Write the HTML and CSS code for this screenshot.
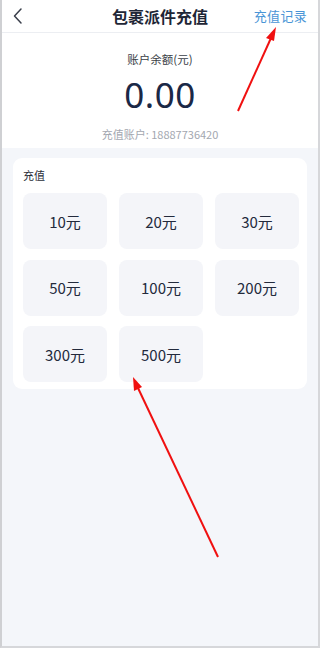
FILE: index.html
```html
<!DOCTYPE html>
<html lang="zh">
<head>
<meta charset="utf-8">
<link rel="stylesheet" href="styles.css">
</head>
<body>
<div class="screen">
  <header class="topbar">
    <span class="back">
      <svg width="12" height="18" viewBox="0 0 12 18"><path d="M9 2 L2.5 9 L9 16" fill="none" stroke="#3a3f4b" stroke-width="1.5" stroke-linecap="round" stroke-linejoin="round"/></svg>
    </span>
    <h1 class="title">包裹派件充值</h1>
    <a class="record">充值记录</a>
  </header>
  <section class="balance">
    <div class="balance-label">账户余额(元)</div>
    <div class="balance-value">0.00</div>
    <div class="account">充值账户: 18887736420</div>
  </section>
  <main class="content">
    <div class="card">
      <div class="card-title">充值</div>
      <div class="grid">
        <div class="amount">10元</div>
        <div class="amount">20元</div>
        <div class="amount">30元</div>
        <div class="amount">50元</div>
        <div class="amount">100元</div>
        <div class="amount">200元</div>
        <div class="amount">300元</div>
        <div class="amount">500元</div>
      </div>
    </div>
  </main>
  <svg class="arrows" width="320" height="648" viewBox="0 0 320 648">
    <g stroke="#f01010" stroke-width="2" fill="#f01010">
      <line x1="238" y1="111" x2="271" y2="38"/>
      <polygon points="276,27 266,38 274,41" stroke="none"/>
      <line x1="218" y1="557" x2="138" y2="388"/>
      <polygon points="133,377 134,391 142,387" stroke="none"/>
    </g>
  </svg>
</div>
</body>
</html>
```
FILE: styles.css
```css
* { box-sizing: border-box; margin: 0; padding: 0; }
html, body { width: 320px; height: 648px; overflow: hidden; }
body {
  font-family: "Noto Sans CJK SC", "Noto Sans", sans-serif;
  background: #f4f6fa;
}
.screen {
  position: relative;
  width: 320px;
  height: 648px;
  background: #f4f6fa;
  border-left: 2px solid #cfd0d3;
  border-right: 2px solid #d6d7da;
  border-bottom: 2px solid #d6d7da;
  display: flex;
  flex-direction: column;
}
.topbar {
  height: 33px;
  background: #fff;
  border-bottom: 1px solid #eceef2;
  display: flex;
  align-items: center;
  justify-content: space-between;
  padding: 0 11px 0 10px;
  position: relative;
}
.back { display: flex; align-items: center; width: 20px; height: 20px; margin-top: -1px; }
.title {
  position: absolute;
  left: 0; right: 0;
  text-align: center;
  font-size: 16px;
  font-weight: 700;
  color: #1e2636;
  line-height: 30px;
  pointer-events: none;
}
.record {
  font-size: 13px;
  letter-spacing: 0.3px;
  color: #4a95d6;
  line-height: 30px;
  position: relative;
}
.balance {
  background: #fff;
  height: 115px;
  display: flex;
  flex-direction: column;
  align-items: center;
  padding-top: 17px;
}
.balance-label { font-size: 11.5px; color: #3b3f48; line-height: 18px; }
.balance-value {
  font-family: "Noto Sans", sans-serif;
  font-size: 35px;
  color: #1a2846;
  line-height: 44px;
  margin-top: 5px;
  letter-spacing: 0.5px;
}
.account { font-size: 11px; color: #a3a7b0; line-height: 16px; margin-top: 9px; }
.content { padding: 10px 11px 0 11px; }
.card {
  background: #fff;
  border-radius: 9px;
  padding: 9px 9px 7px 10px;
}
.card-title { font-size: 11px; color: #2a2e38; line-height: 16px; }
.grid {
  margin-top: 10px;
  display: grid;
  grid-template-columns: repeat(3, 84px);
  column-gap: 12px;
  row-gap: 10.5px;
}
.amount {
  height: 56px;
  background: #f4f5f9;
  border-radius: 8px;
  display: flex;
  align-items: center;
  justify-content: center;
  font-size: 15px;
  color: #232a3c;
}
.arrows { position: absolute; left: -2px; top: 0; pointer-events: none; }
```
